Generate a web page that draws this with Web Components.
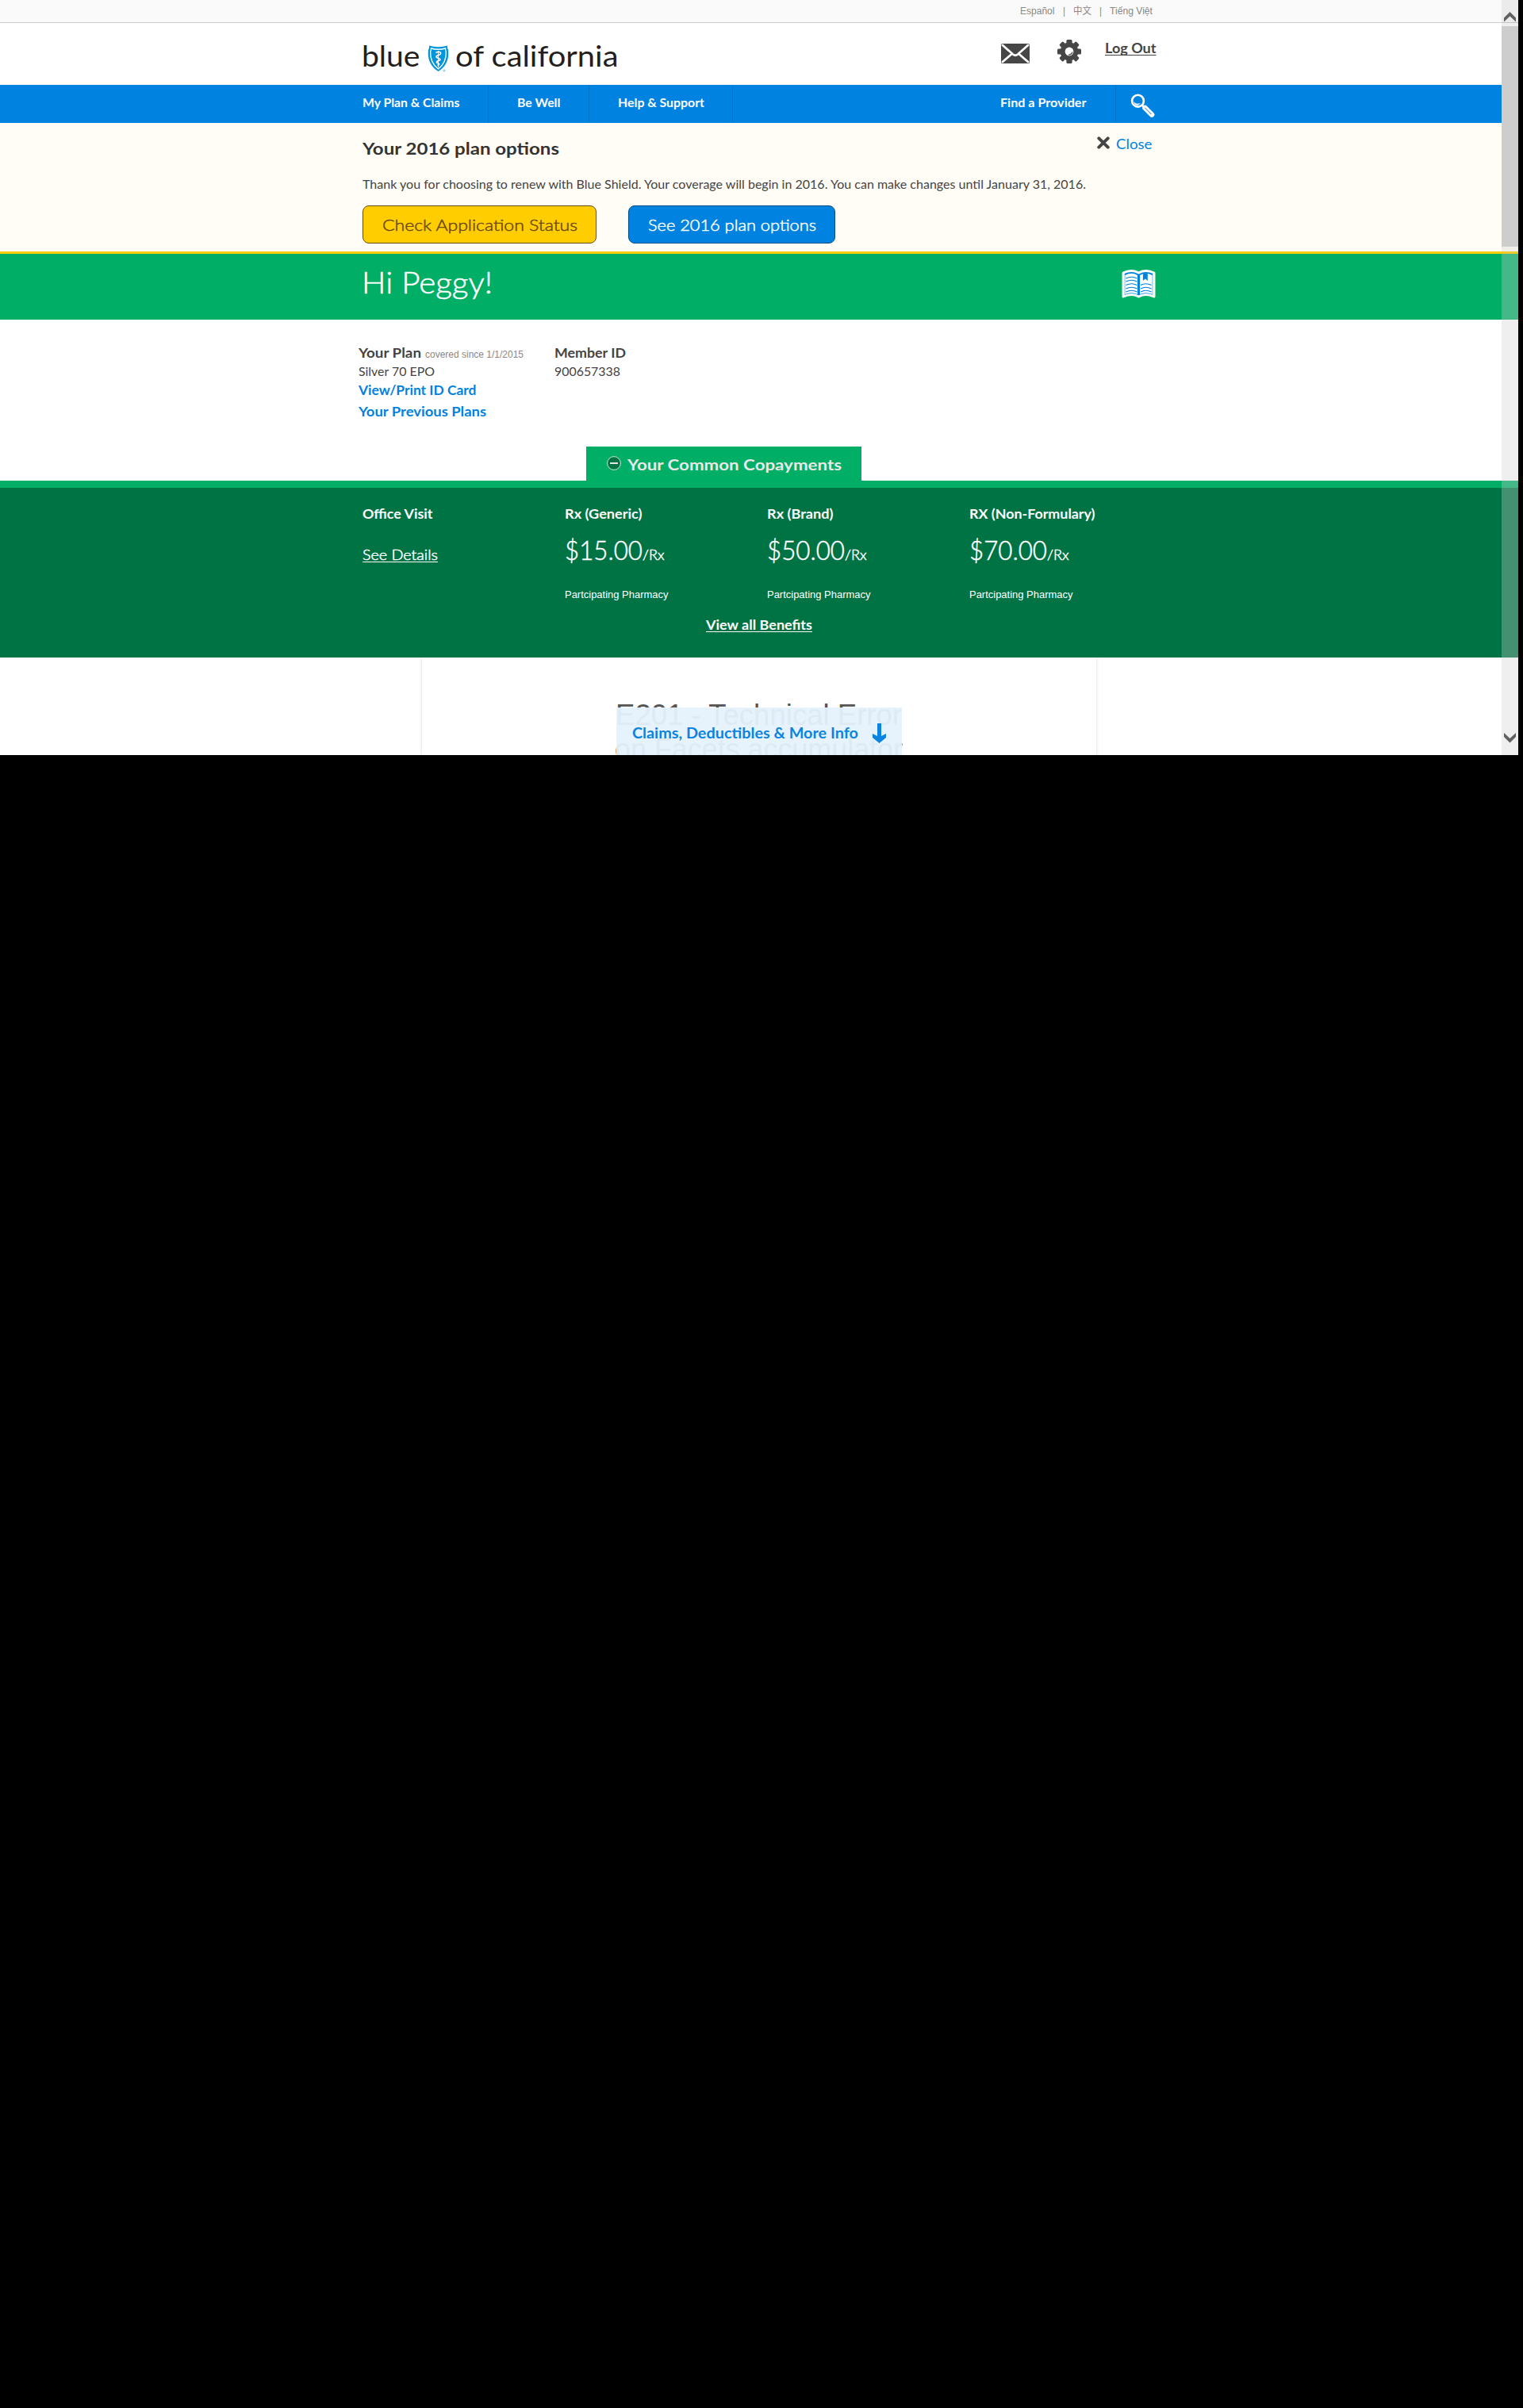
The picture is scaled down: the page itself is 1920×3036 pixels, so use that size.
<!DOCTYPE html>
<html lang="en">
<head>
<meta charset="utf-8">
<title>Blue of California - Member Home</title>
<style>
html,body{margin:0;background:#000}
body{width:1920px;height:3036px;overflow:hidden;font-family:Lato,"Noto Sans",sans-serif}
</style>
</head>
<body>
<member-page></member-page>
<script>
/* One line of text whose box ends on its baseline.
   size: font size, rise: distance from box top to baseline, w: set width. */
class TextLine extends HTMLElement {
  connectedCallback() {
    const g = n => parseFloat(this.getAttribute(n));
    const size = g('size'), rise = g('rise'), w = g('w');
    const arial = this.hasAttribute('arial');
    const lh = 2 * (rise - (arial ? 0.3465 : 0.387) * size) + 0.6;
    const root = this.attachShadow({mode: 'open'});
    root.innerHTML = `<style>
      :host{display:block;flex:none;width:${w}px;height:${rise}px;margin-left:${g('x') || 0}px;
        font-size:${size}px;line-height:${lh}px;white-space:nowrap;
        ${arial ? 'font-family:"Liberation Sans","Noto Sans CJK SC",sans-serif;' : ''}}
      :host([bold]){font-weight:700}
      :host([light]){font-weight:300;-webkit-text-stroke:.5px currentColor}
      :host([underline]) span{text-decoration:underline;text-decoration-thickness:1px;text-underline-offset:2px}
      span{display:inline-block;text-decoration-skip-ink:none;transform-origin:0 0}
      </style><span><slot></slot></span>`;
    const s = root.querySelector('span');
    s.style.transform = `scaleX(${(w / s.getBoundingClientRect().width).toFixed(4)})`;
  }
}

const define = (name, css, html) => customElements.define(name, class extends HTMLElement {
  connectedCallback() {
    if (this.shadowRoot) return;
    this.attachShadow({mode: 'open'}).innerHTML = `<style>
      :host{display:block;box-sizing:border-box}
      *{box-sizing:border-box}
      .wrap{width:1000px;margin:0 auto}
      .row{display:flex;align-items:flex-start}
      svg{display:block;flex:none}
      ${css}</style>${html}`;
  }
});

customElements.define('text-line', TextLine);

define('language-bar', `:host{height:29px;background:#fafafa;border-bottom:1px solid #ccc;color:#888}`, `
<div class="wrap row">
  <text-line arial size="12.3" rise="18.500" x="829" w="43.5">Español</text-line>
  <text-line arial size="12" rise="18.500" x="10" w="3">|</text-line>
  <text-line arial size="12" rise="18.500" x="10" w="23">中文</text-line>
  <text-line arial size="12" rise="18.500" x="10" w="3">|</text-line>
  <text-line arial size="12.3" rise="18.500" x="10" w="54">Tiếng Việt</text-line>
</div>`);

define('site-header', `:host{height:78px;background:#fff;color:#231f20}
.shield{margin:28px 0 0 9.500px}.mail{margin:26px 0 0 483px}.gear{margin:21px 0 0 35px}.out{color:#444}`, `
<div class="wrap row">
  <text-line size="37.5" rise="55" x="-1" w="73.500">blue</text-line>
  <svg class="shield" width="27" height="34" viewBox="0 0 27 34">
    <path d="M2 .5Q13.500 4 25 .5Q24.500 3 26 6Q28 24 13.500 33Q-1 24 1 6Q2.500 3 2 .5Z" fill="#0095da"/>
    <path d="M4.500 4Q13.500 6.500 22.500 4Q22.300 6 23.300 8Q24 22 13.500 30Q3 22 3.700 8Q4.700 6 4.500 4Z" fill="none" stroke="#fff" stroke-width="1.300"/>
    <path d="M13.500 7V28" stroke="#fff" stroke-width="1"/>
    <path d="M10.500 9.500Q15 7 16.500 9.500Q17 12 12.500 13Q9.500 14.500 12.500 16Q17 17 15.500 19Q11 20 11.500 22Q15 23 14.500 24.500L12.500 25.500" fill="none" stroke="#fff" stroke-width="1.700"/>
    <circle cx="21" cy="32" r="1.200" fill="none" stroke="#62bde9" stroke-width=".8"/>
  </svg>
  <text-line size="37.5" rise="55" x="7.500" w="205.500">of california</text-line>
  <svg class="mail" width="36" height="25" viewBox="0 0 36 25">
    <rect width="36" height="25" rx="1.500" fill="#464646"/>
    <path d="M2 2L15 13.500Q18 16 21 13.500L34 2M2 23L13 13.500M34 23L23 13.500" fill="none" stroke="#fff" stroke-width="2.700" stroke-linecap="round"/>
  </svg>
  <svg class="gear" width="30" height="30" viewBox="-15 -15 30 30">
    <g fill="#464646"><circle r="11.400"/>
      <rect x="-3.600" y="-15" width="7.200" height="30" rx="1.500"/><rect x="-15" y="-3.600" width="30" height="7.200" rx="1.500"/>
      <g transform="rotate(45)"><rect x="-3.300" y="-15" width="6.600" height="30" rx="1.500"/><rect x="-15" y="-3.300" width="30" height="6.600" rx="1.500"/></g>
    </g>
    <circle r="5.400" fill="#fff"/><path d="M4 .5Q4 4.300 -1 4.300Q2.800 3 4 .5Z" fill="#464646" stroke="#464646" stroke-width=".7"/>
  </svg>
  <text-line class="out" bold underline size="16.5" rise="38.700" x="30" w="64.500">Log Out</text-line>
</div>`);

define('main-nav', `:host{height:48px;background:#0082e0;color:#fff}
.cell{height:48px;border-right:1px solid #0074c7}.a{width:159px}.b{width:127px;padding-left:36px}.c{width:181px;padding-left:36px}
.d{width:146px;margin-left:337px}.s{margin:11px 0 0 18px}`, `
<div class="wrap row">
  <div class="cell a"><text-line bold size="14.8" rise="28" w="122.500">My Plan &amp; Claims</text-line></div>
  <div class="cell b"><text-line bold size="14.8" rise="28" w="54.500">Be Well</text-line></div>
  <div class="cell c"><text-line bold size="14.8" rise="28" w="109">Help &amp; Support</text-line></div>
  <div class="cell d"><text-line bold size="14.8" rise="28" w="108.500">Find a Provider</text-line></div>
  <svg class="s" width="31" height="31" viewBox="0 0 31 31">
    <circle cx="9.500" cy="9.200" r="7.400" fill="none" stroke="#fff" stroke-width="2.600"/>
    <path d="M4 9Q6 14.500 13 12Q9 17 5 13Z" fill="#fff"/>
    <path d="M14 14L17.500 17" stroke="#fff" stroke-width="2.500"/>
    <path d="M18.500 18L27 26.500" stroke="#fff" stroke-width="6.600" stroke-linecap="round"/>
    <path d="M18.300 17.800L26.500 26" stroke="#0082e0" stroke-width="1"/>
  </svg>
</div>`);

define('action-button', `:host{height:48px;flex:none;border:1px solid #004f88;border-radius:8px;background:#0082e0;color:#fff;padding-left:24px}
:host([yellow]){background:#ffcd00;color:#6b4a12;border-color:#6b4a12}`, `<slot></slot>`);

define('plan-notice', `:host{height:165px;background:#fffdf5;border-bottom:3px solid #ffcd00;color:#444}
.h{color:#333}.x{margin:17px 0 0 677.500px}.c{color:#0082e0}.btns{margin-top:21px}`, `
<div class="wrap">
  <div class="row">
    <text-line class="h" bold size="21.5" rise="40.500" w="248">Your 2016 plan options</text-line>
    <svg class="x" width="16" height="16" viewBox="0 0 16 16"><path d="M2.300 2.300L13.700 13.700M13.700 2.300L2.300 13.700" stroke="#464646" stroke-width="4" stroke-linecap="round"/></svg>
    <text-line class="c" size="17.2" rise="33" x="8" w="45.500">Close</text-line>
  </div>
  <text-line size="15.4" rise="42.500" w="912">Thank you for choosing to renew with Blue Shield. Your coverage will begin in 2016. You can make changes until January 31, 2016.</text-line>
  <div class="row btns">
    <action-button yellow style="width:295px"><text-line light size="20" rise="31" w="246">Check Application Status</text-line></action-button>
    <action-button style="width:261px;margin-left:40px"><text-line light size="20" rise="31" w="212">See 2016 plan options</text-line></action-button>
  </div>
</div>`);

define('greeting-bar', `:host{height:83px;background:#00ae66;color:#fff}.book{margin:20px 0 0 793px}`, `
<div class="wrap row">
  <text-line size="37" light rise="50.500" x="-1" w="165">Hi Peggy!</text-line>
  <svg class="book" width="43" height="37" viewBox="0 0 40 37" preserveAspectRatio="none">
    <path d="M2 4Q12 -1 20 4Q28 -1 38 4V34Q28 29 20 34Q12 29 2 34Z" fill="#0082e0" stroke="#fff" stroke-width="3" stroke-linejoin="round"/>
    <path d="M4 7Q12 2.500 18.500 7V31Q12 27.500 4 31ZM36 7Q28 2.500 21.500 7V31Q28 27.500 36 31Z" fill="#fff"/>
    <path d="M25 4.500H30.500V14L27.700 11.500L25 14Z" fill="#0082e0"/>
    <path d="M5 11Q12 7.500 18 11M5 15Q12 11.500 18 15M5 19.500Q12 16 18 19.500M5 24Q12 20.500 18 24M5 28Q12 24.500 18 28M22.500 19.500Q28 16 35 19.500M22.500 24Q28 20.500 35 24M22.500 28Q28 24.500 35 28" fill="none" stroke="#0082e0" stroke-width="1.200"/>
  </svg>
</div>`);

define('plan-summary', `:host{height:160px;background:#fff;color:#444}
.g{color:#888}.l{color:#0082e0}.m{margin-left:39px}.row{margin-left:-5px}`, `
<div class="wrap"><div class="row">
  <div>
    <div style="display:flex">
      <text-line bold size="16.8" rise="48" w="79">Your Plan</text-line>
      <text-line arial class="g" size="12.6" rise="48.500" x="5" w="124">covered since 1/1/2015</text-line>
    </div>
    <text-line size="15.5" rise="22.500" w="96">Silver 70 EPO</text-line>
    <text-line class="l" bold size="16.8" rise="24" w="148.500">View/Print ID Card</text-line>
    <text-line class="l" bold size="16.8" rise="27" w="161">Your Previous Plans</text-line>
  </div>
  <div class="m">
    <text-line bold size="16.8" rise="48" w="90">Member ID</text-line>
    <text-line size="15.5" rise="23" w="83">900657338</text-line>
  </div>
</div></div>`);

define('copay-tab', `:host{height:52px;background:#fff;border-bottom:9px solid #00ae66}
.tab{width:347px;height:43px;margin-left:739px;background:#00ae66;color:#e8e8e8;padding-left:26px}
svg{margin-top:12px}`, `
<div class="tab row">
  <svg width="18" height="18" viewBox="0 0 18 18"><circle cx="9" cy="9" r="8.400" fill="#007345" stroke="#c9e6d8" stroke-width="1"/><rect x="4" y="8" width="10" height="2" fill="#e8e8e8"/></svg>
  <text-line bold size="19.8" rise="30" x="7.500" w="270">Your Common Copayments</text-line>
</div>`);

define('copay-item', `:host{width:255px;flex:none}.p{display:flex}`, `
<slot name="title"></slot><div class="p"><slot name="price"></slot><slot name="unit"></slot></div><slot name="note"></slot>`);

define('copay-panel', `:host{height:214px;background:#007345;color:#fff}`, `
<div class="wrap">
  <div class="row">
    <copay-item><text-line slot="title" bold size="16.4" rise="39" w="88.500">Office Visit</text-line>
      <text-line slot="price" light underline size="18.2" rise="52.700" w="95">See Details</text-line></copay-item>
    <copay-item><text-line slot="title" bold size="16.4" rise="39" w="97.500">Rx (Generic)</text-line>
      <text-line slot="price" light size="32.5" rise="52.700" w="98">$15.00</text-line><text-line slot="unit" light size="18.2" rise="52.700" w="27.500">/Rx</text-line>
      <text-line slot="note" arial size="13.4" rise="47.500" w="130.500">Partcipating Pharmacy</text-line></copay-item>
    <copay-item><text-line slot="title" bold size="16.4" rise="39" w="83.500">Rx (Brand)</text-line>
      <text-line slot="price" light size="32.5" rise="52.700" w="98">$50.00</text-line><text-line slot="unit" light size="18.2" rise="52.700" w="27.500">/Rx</text-line>
      <text-line slot="note" arial size="13.4" rise="47.500" w="130.500">Partcipating Pharmacy</text-line></copay-item>
    <copay-item style="width:200px"><text-line slot="title" bold size="16.4" rise="39" w="158.500">RX (Non-Formulary)</text-line>
      <text-line slot="price" light size="32.5" rise="52.700" w="98">$70.00</text-line><text-line slot="unit" light size="18.2" rise="52.700" w="27.500">/Rx</text-line>
      <text-line slot="note" arial size="13.4" rise="47.500" w="130.500">Partcipating Pharmacy</text-line></copay-item>
  </div>
  <text-line bold underline size="16.8" rise="39.800" x="433" w="134">View all Benefits</text-line>
</div>`);

define('claims-panel', `:host{height:123px;background:#fff;overflow:hidden}
.card{width:850px;height:123px;margin-left:532px;box-shadow:0 0 4px rgba(0,0,0,.16);background:#fff;color:#555;padding-left:245px;clip-path:inset(0 -5px)}
.more{position:absolute;left:777px;top:892px;width:360px;height:60px;background:rgba(229,241,252,.95);color:#0a84e0;padding-left:20px}
svg{margin:20px 0 0 18px}`, `
<div class="card">
  <text-line arial size="36" rise="85" x="-1" w="361">E201 - Technical Error</text-line>
  <text-line arial size="36" rise="43" x="-2" w="363">on Facets accumulator</text-line>
</div>
<div class="more row">
  <text-line bold size="18.6" rise="39.700" w="285">Claims, Deductibles &amp; More Info</text-line>
  <svg width="17" height="25" viewBox="0 0 17 25"><path d="M6 0H11V16L17 13V18L8.500 25L0 18V13L6 16Z" fill="#0a84e0"/></svg>
</div>`);

define('scroll-rail', `:host{position:absolute;left:1893px;top:0;width:21px;height:952px;
 background:linear-gradient(rgba(160,160,160,.17) 0 33px,rgba(237,237,237,.3) 33px 311px,rgba(190,190,190,.24) 311px 320px,rgba(205,205,205,.33) 320px)}
.rail{height:952px;display:flex;flex-direction:column;padding:15px 0}.thumb{height:278px;margin-top:5px;background:#cdcdcd}.dn{margin:auto 0 0 3px}`, `
<div class="rail">
  <svg style="margin-left:3px" width="15" height="13" viewBox="0 0 15 13"><path d="M7.500 0L15 7.500V12.500L7.500 5.500L0 12.500V7.500Z" fill="#606060"/></svg>
  <div class="thumb"></div>
  <svg class="dn" width="15" height="13" viewBox="0 0 15 13"><path d="M7.500 12.500L15 5V0L7.500 7L0 0V5Z" fill="#606060"/></svg>
</div>`);

define('member-page', `:host{position:relative;width:1914px;height:952px;overflow:hidden;background:#fff}`, `
<language-bar></language-bar><site-header></site-header><main-nav></main-nav><plan-notice></plan-notice>
<greeting-bar></greeting-bar><plan-summary></plan-summary><copay-tab></copay-tab><copay-panel></copay-panel>
<claims-panel></claims-panel><scroll-rail></scroll-rail>`);
</script>
</body>
</html>
